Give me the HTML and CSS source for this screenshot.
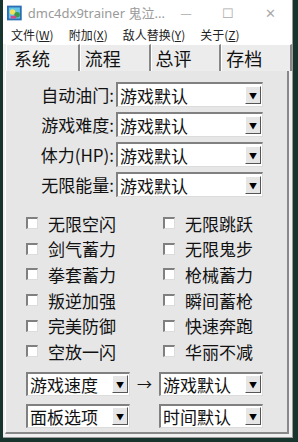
FILE: index.html
```html
<!DOCTYPE html>
<html>
<head>
  <link rel="stylesheet" href="styles.css">
</head>
<body>
  <div class="window">
    <div class="titlebar">
      <svg class="app-icon" width="16" height="16" viewBox="0 0 16 16">
        <rect width="16" height="16" fill="#2a6fb5"/>
        <rect x="2" y="2" width="12" height="12" fill="#63c6e8"/>
        <circle cx="6" cy="7" r="3" fill="#f2e35a"/>
        <circle cx="11" cy="10" r="3" fill="#3a9a4a"/>
        <rect x="4" y="11" width="6" height="3" fill="#d24a8c"/>
      </svg>
      <span class="title">dmc4dx9trainer 鬼泣...</span>
      <span class="ctl min">—</span>
      <span class="ctl max">☐</span>
      <span class="ctl close">✕</span>
    </div>
    <div class="menubar">
      <span>文件(<u>W</u>)</span>
      <span>附加(<u>X</u>)</span>
      <span>敌人替换(<u>Y</u>)</span>
      <span>关于(<u>Z</u>)</span>
    </div>
    <div class="tabs">
      <div class="tab active">系统</div>
      <div class="tab">流程</div>
      <div class="tab">总评</div>
      <div class="tab">存档</div>
    </div>
    <div class="panel">
      <div class="settings">
        <div class="row"><span class="label">自动油门:</span><div class="combo wide"><span>游戏默认</span><i class="drop">▼</i></div></div>
        <div class="row"><span class="label">游戏难度:</span><div class="combo wide"><span>游戏默认</span><i class="drop">▼</i></div></div>
        <div class="row"><span class="label">体力(HP):</span><div class="combo wide"><span>游戏默认</span><i class="drop">▼</i></div></div>
        <div class="row"><span class="label">无限能量:</span><div class="combo wide"><span>游戏默认</span><i class="drop">▼</i></div></div>
      </div>
      <div class="checks">
        <label class="check"><i class="box"></i>无限空闪</label>
        <label class="check"><i class="box"></i>无限跳跃</label>
        <label class="check"><i class="box"></i>剑气蓄力</label>
        <label class="check"><i class="box"></i>无限鬼步</label>
        <label class="check"><i class="box"></i>拳套蓄力</label>
        <label class="check"><i class="box"></i>枪械蓄力</label>
        <label class="check"><i class="box"></i>叛逆加强</label>
        <label class="check"><i class="box"></i>瞬间蓄枪</label>
        <label class="check"><i class="box"></i>完美防御</label>
        <label class="check"><i class="box"></i>快速奔跑</label>
        <label class="check"><i class="box"></i>空放一闪</label>
        <label class="check"><i class="box"></i>华丽不减</label>
      </div>
      <div class="bottom">
        <div class="combo small"><span>游戏速度</span><i class="drop">▼</i></div>
        <span class="arrow">→</span>
        <div class="combo small"><span>游戏默认</span><i class="drop">▼</i></div>
      </div>
      <div class="bottom">
        <div class="combo small"><span>面板选项</span><i class="drop">▼</i></div>
        <span class="arrow"></span>
        <div class="combo small"><span>时间默认</span><i class="drop">▼</i></div>
      </div>
    </div>
  </div>
</body>
</html>
```

FILE: styles.css
```css
body {
  margin: 0;
  width: 298px;
  height: 442px;
  background-color: #17352c;
  font-family: "Noto Sans CJK SC", "Liberation Sans", sans-serif;
  overflow: hidden;
}

.window {
  margin-left: 3px;
  width: 289px;
  height: 437px;
  background-color: #f0f0f0;
  border-right: 1px solid #9a9a9a;
  border-bottom: 1px solid #9a9a9a;
  display: flex;
  flex-direction: column;
}

.titlebar {
  height: 25px;
  background-color: #ffffff;
  display: flex;
  align-items: center;
  font-size: 12px;
  color: #999;
}

.app-icon {
  margin-left: 4px;
  margin-right: 6px;
}

.title {
  font-family: "Noto Sans", "Noto Sans CJK SC", sans-serif;
  font-size: 13px;
  color: #9a9a9a;
  width: 140px;
  white-space: nowrap;
}

.ctl {
  width: 46px;
  text-align: center;
  color: #aaa;
  font-size: 13px;
}

.menubar {
  height: 19px;
  background-color: #fff;
  display: flex;
  align-items: center;
  font-size: 12px;
  color: #222;
  padding-left: 8px;
  gap: 15px;
}

.menubar u {
  text-decoration: underline;
}

.tabs {
  height: 27px;
  display: flex;
  padding-left: 3px;
  background-color: #f0f0f0;
}

.tab {
  width: 68px;
  border-top: 1px solid #fff;
  border-left: 1px solid #fff;
  border-right: 2px solid #888;
  font-size: 18px;
  line-height: 26px;
  padding-left: 4px;
  color: #111;
  background-color: #ececec;
}

.tab.active {
  padding-left: 7px;
  background-color: #f0f0f0;
}

.panel {
  flex: 1;
  margin: 0 3px 3px 2px;
  border-left: 1px solid #fff;
  border-right: 2px solid #888;
  border-bottom: 2px solid #888;
  background-color: #e6e6e6;
  display: flex;
  flex-direction: column;
}

.settings {
  padding-top: 11px;
  display: flex;
  flex-direction: column;
  gap: 5px;
}

.row {
  display: flex;
  align-items: center;
  height: 25px;
}

.label {
  width: 108px;
  text-align: right;
  font-size: 17px;
  color: #111;
  padding-right: 2px;
}

.combo {
  height: 25px;
  box-sizing: border-box;
  background-color: #fff;
  border-top: 2px solid #808080;
  border-left: 2px solid #808080;
  border-right: 1px solid #dcdcdc;
  border-bottom: 1px solid #dcdcdc;
  display: flex;
  align-items: center;
  justify-content: space-between;
  font-size: 17px;
  color: #111;
  padding-left: 2px;
}

.combo.wide {
  width: 147px;
}

.combo.small {
  width: 104px;
  height: 24px;
}

.drop {
  font-style: normal;
  font-size: 8px;
  width: 14px;
  height: 16px;
  margin-right: 1px;
  background-color: #e6e6e6;
  border-top: 1px solid #fff;
  border-left: 1px solid #fff;
  border-right: 1px solid #555;
  border-bottom: 1px solid #555;
  display: flex;
  align-items: center;
  justify-content: center;
  color: #000;
}

.checks {
  margin-top: 14px;
  padding-left: 20px;
  display: grid;
  grid-template-columns: 137px 120px;
  row-gap: 1px;
}

.check {
  display: flex;
  align-items: center;
  height: 24.6px;
  font-size: 17px;
  color: #111;
}

.box {
  width: 9px;
  height: 9px;
  background-color: #fff;
  border-top: 2px solid #808080;
  border-left: 2px solid #808080;
  border-right: 1px solid #dcdcdc;
  border-bottom: 1px solid #dcdcdc;
  margin-right: 10px;
}

.bottom {
  display: flex;
  align-items: center;
  padding-left: 20px;
  margin-top: 8px;
}

.bottom + .bottom {
  margin-top: 8px;
}

.arrow {
  width: 29px;
  text-align: center;
  font-size: 15px;
  color: #111;
}
```
